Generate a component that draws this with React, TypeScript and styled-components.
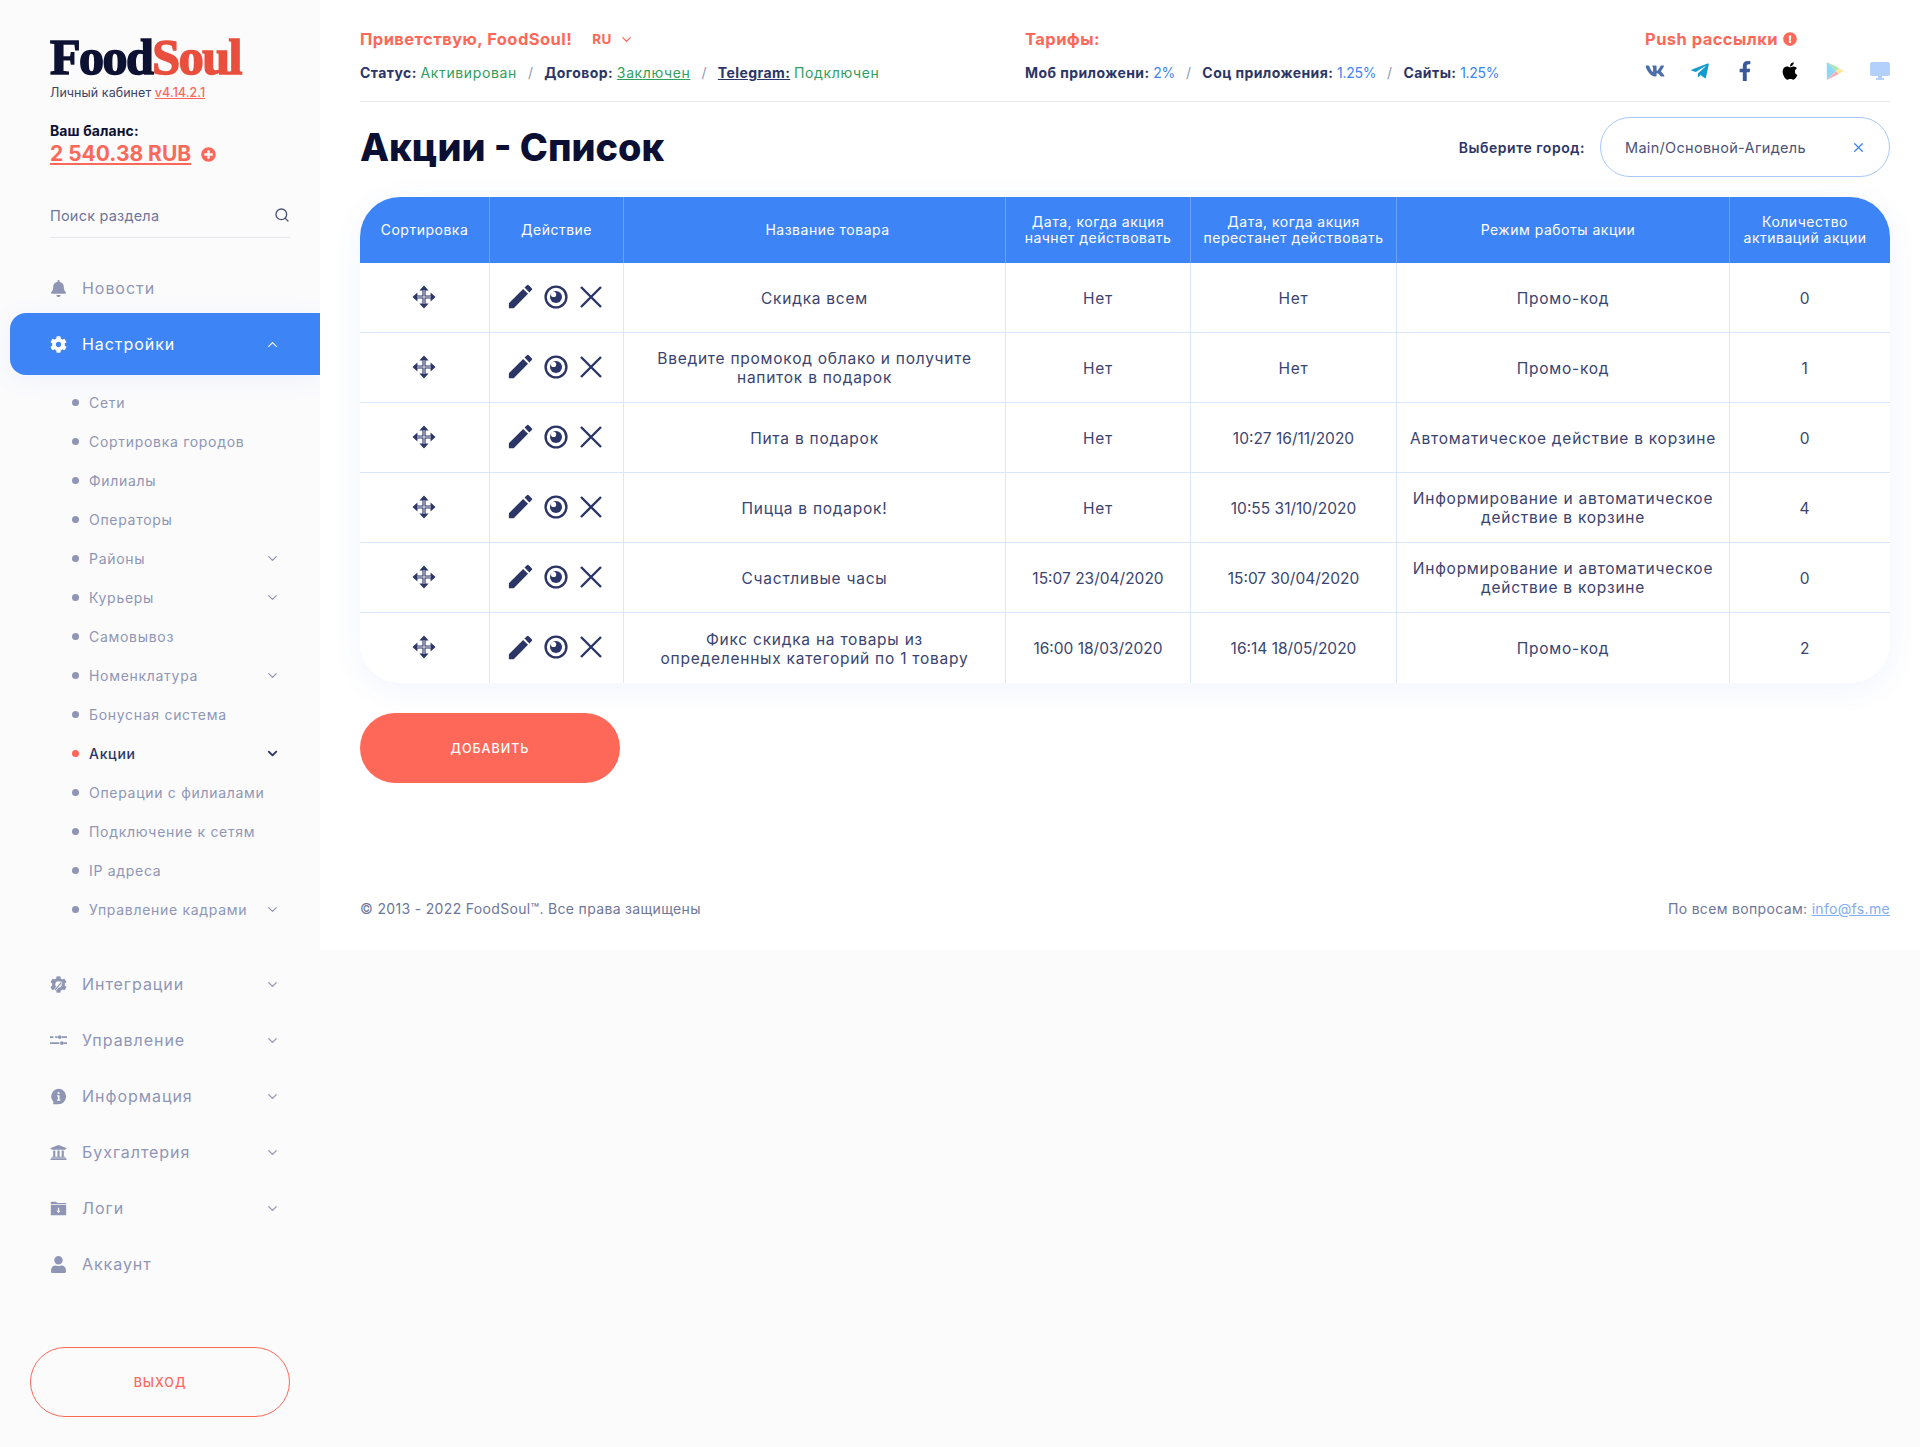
import React from "react";
import styled, { createGlobalStyle } from "styled-components";
import { FaApple, FaBell, FaCog, FaExclamationCircle, FaFacebookF, FaPlusCircle, FaTelegramPlane, FaUniversity, FaUser, FaVk } from "react-icons/fa";
import { FiChevronDown, FiChevronUp, FiSearch, FiX } from "react-icons/fi";
import { MdDesktopWindows, MdEdit } from "react-icons/md";

const NAVY = "#2b3566";
const CORAL = "#fd6858";
const BLUE = "#3d84f7";
const MUTED = "#8f96b5";

const GlobalStyle = createGlobalStyle`
  html, body { margin: 0; padding: 0; background: #fbfbfc; }
  body { font-family: "Inter", "Noto Sans", sans-serif; color: ${NAVY}; }
  * { box-sizing: border-box; }
`;

const Page = styled.div`
  display: flex;
  align-items: flex-start;
  width: 1920px;
  height: 1447px;
  overflow: hidden;
`;

// Sidebar
const Sidebar = styled.aside`
  width: 320px;
  flex: none;
  padding-top: 34px;
`;
const Brand = styled.div`
  padding-left: 50px;
`;
const Logo = styled.div`
  font-family: "Liberation Serif", serif;
  font-weight: 700;
  font-size: 50px;
  line-height: 46px;
  letter-spacing: -1.5px;
  -webkit-text-stroke: 1.6px currentColor;
  color: #0d1233;
  span { color: #e94f3d; }
`;
const Cabinet = styled.div`
  margin-top: 4px;
  font-size: 12.5px;
  line-height: 18px;
  letter-spacing: 0.05px;
  color: #3b4368;
  a { color: ${CORAL}; text-decoration: underline; font-weight: 500; }
`;
const BalanceLabel = styled.div`
  margin-top: 20px;
  font-size: 14px;
  font-weight: 700;
  line-height: 18px;
  letter-spacing: 0.1px;
  color: #0d1233;
`;
const BalanceRow = styled.div`
  display: flex;
  align-items: center;
  gap: 10px;
  margin-top: 1px;
  font-size: 21px;
  line-height: 26px;
  font-weight: 700;
  color: ${CORAL};
  u { text-underline-offset: 2px; }
  svg { width: 15px; height: 15px; }
`;
const Search = styled.div`
  display: flex;
  align-items: center;
  justify-content: space-between;
  width: 240px;
  height: 43px;
  margin: 28px 0 0 50px;
  padding-bottom: 2px;
  border-bottom: 1px solid #e6e7ec;
  font-size: 14.5px;
  letter-spacing: 0.2px;
  color: #6e769a;
  svg { width: 16px; height: 16px; color: #4a5278; }
`;
const NavList = styled.nav`
  margin-top: 22px;
`;
const NavItem = styled.div<{ $active?: boolean }>`
  display: flex;
  align-items: center;
  height: ${(p) => (p.$active ? "62px" : "56px")};
  margin-top: ${(p) => (p.$active ? "-3px" : "0")};
  margin-left: ${(p) => (p.$active ? "10px" : "0")};
  padding-left: ${(p) => (p.$active ? "40px" : "50px")};
  padding-right: 40px;
  font-size: 16px;
  letter-spacing: 0.95px;
  color: ${(p) => (p.$active ? "#fff" : MUTED)};
  background: ${(p) => (p.$active ? BLUE : "transparent")};
  border-radius: ${(p) => (p.$active ? "16px 0 0 16px" : "0")};
  box-shadow: ${(p) => (p.$active ? "0 4px 24px rgba(61,132,247,.08)" : "none")};
`;
const NavIcon = styled.span`
  display: flex;
  align-items: center;
  justify-content: center;
  width: 17px;
  height: 18px;
  margin-right: 15px;
  flex: none;
  svg { width: 17px; height: 17px; display: block; }
`;
const Grow = styled.span`
  flex: 1;
`;
const Chevron = styled.span<{ $dark?: boolean }>`
  display: flex;
  color: ${(p) => (p.$dark ? NAVY : "inherit")};
  svg { width: 15px; height: 15px; stroke-width: ${(p) => (p.$dark ? 3 : 2)}; display: block; }
`;
const SubList = styled.div`
  padding-top: 8px;
  padding-bottom: 27px;
`;
const SubItem = styled.div<{ $active?: boolean }>`
  display: flex;
  align-items: center;
  height: 39px;
  padding-left: 72px;
  padding-right: 40px;
  font-size: 14px;
  letter-spacing: 0.7px;
  color: ${(p) => (p.$active ? NAVY : MUTED)};
  font-weight: ${(p) => (p.$active ? 500 : 400)};
  &::before {
    content: "";
    width: 7px;
    height: 7px;
    margin-right: 10px;
    border-radius: 50%;
    background: ${(p) => (p.$active ? CORAL : MUTED)};
    flex: none;
  }
`;
const Logout = styled.button`
  display: block;
  width: 260px;
  height: 70px;
  margin: 55px 0 0 30px;
  border: 1px solid ${CORAL};
  border-radius: 35px;
  background: transparent;
  color: ${CORAL};
  font-family: inherit;
  font-size: 12.5px;
  font-weight: 500;
  letter-spacing: 1px;
  text-transform: uppercase;
`;

// Main panel
const Main = styled.main`
  display: flex;
  flex-direction: column;
  width: 1600px;
  height: 950px;
  padding: 0 30px 0 40px;
  background: #fff;
`;
const TopBar = styled.header`
  display: grid;
  grid-template-columns: 665px 620px 1fr;
  height: 102px;
  padding-top: 28px;
  border-bottom: 1px solid #e8e9ec;
`;
const TopHeading = styled.div`
  display: flex;
  align-items: center;
  height: 22px;
  gap: 5px;
  font-size: 16.5px;
  letter-spacing: 0.45px;
  font-weight: 700;
  color: ${CORAL};
  svg { width: 14px; height: 14px; }
`;
const Lang = styled.span`
  display: flex;
  align-items: center;
  gap: 7px;
  margin-left: 15px;
  font-size: 13.5px;
  svg { width: 15px; height: 15px; }
`;
const TopLine = styled.div`
  display: flex;
  align-items: center;
  height: 22px;
  margin-top: 11px;
  font-size: 14px;
  letter-spacing: 0.35px;
  white-space: pre;
  b { font-weight: 700; letter-spacing: 0.42px; }
`;
const Green = styled.span`
  letter-spacing: 0.62px;
  color: #2f9e5e;
`;
const Rate = styled.span`
  letter-spacing: -0.3px;
  color: ${BLUE};
`;
const Sep = styled.span`
  margin: 0 11px;
  color: ${MUTED};
`;
const SocialRow = styled.div`
  display: flex;
  gap: 25px;
  margin-top: 11px;
`;
const Social = styled.span<{ $color: string }>`
  display: flex;
  justify-content: center;
  width: 20px;
  height: 22px;
  color: ${(p) => p.$color};
  svg { width: 20px; height: 20px; display: block; }
`;
const Monitor = styled(MdDesktopWindows)`
  && { width: 24px; height: 24px; margin: -2px; flex: none; }
`;
const TitleRow = styled.div`
  display: flex;
  align-items: center;
  height: 95px;
  padding-bottom: 5px;
`;
const Title = styled.h1`
  flex: 1;
  margin: 0;
  font-size: 37.8px;
  font-weight: 800;
  color: #0b0f33;
`;
const CityLabel = styled.span`
  margin-right: 15px;
  font-size: 14px;
  font-weight: 600;
  letter-spacing: 0.55px;
`;
const CitySelect = styled.div`
  display: flex;
  align-items: center;
  justify-content: space-between;
  width: 290px;
  height: 60px;
  padding: 0 23px 0 24px;
  border: 1px solid #a9c8fb;
  border-radius: 30px;
  font-size: 14.5px;
  letter-spacing: 0.3px;
  color: #4a5278;
  svg { width: 15px; height: 15px; color: ${BLUE}; }
`;
const TableWrap = styled.div`
  border-radius: 40px;
  overflow: hidden;
  box-shadow: 0 6px 30px rgba(61, 100, 247, 0.07);
`;
const Table = styled.table`
  width: 1530px;
  table-layout: fixed;
  border-collapse: separate;
  border-spacing: 0;
  background: #fff;
`;
const Th = styled.th<{ $shift?: number }>`
  height: 66px;
  padding: 0 6px;
  padding-left: ${(p) => 6 + (p.$shift && p.$shift > 0 ? p.$shift : 0)}px;
  padding-right: ${(p) => 6 + (p.$shift && p.$shift < 0 ? -p.$shift : 0)}px;
  background: ${BLUE};
  color: #fff;
  font-size: 14px;
  line-height: 16px;
  font-weight: 400;
  letter-spacing: 0.5px;
  border-right: 1px solid #6da2f9;
  &:last-child { border-right: 0; }
`;
const Td = styled.td<{ $time?: boolean; $wide?: boolean; $last?: boolean }>`
  height: 70px;
  padding: 1px ${(p) => (p.$wide ? "30px" : "8px")} 0;
  padding-right: ${(p) => (p.$last ? "18px" : p.$wide ? "30px" : "8px")};
  text-align: center;
  font-size: 15.5px;
  line-height: 19px;
  color: #3a4470;
  letter-spacing: ${(p) => (p.$time ? "0" : "0.75px")};
  border-right: 1px solid #d9e6fc;
  border-bottom: 1px solid #d9e6fc;
  &:last-child { border-right: 0; }
  tr:last-child & { border-bottom: 0; }
`;
const Actions = styled.div`
  display: flex;
  justify-content: center;
  gap: 11px;
  margin: -3px 2px 0 0;
  svg { width: 24px; height: 24px; display: block; }
`;
const Pencil = styled(MdEdit)`
  && { width: 31px; height: 31px; margin: -3.5px; }
  color: ${NAVY};
`;
const MoveCell = styled.div`
  display: flex;
  justify-content: center;
  margin: -3px 1px 0 0;
  svg { width: 24px; height: 24px; display: block; }
`;
const AddButton = styled.button`
  width: 260px;
  height: 70px;
  margin-top: 30px;
  border: 0;
  border-radius: 35px;
  background: ${CORAL};
  color: #fff;
  font-family: inherit;
  font-size: 12.5px;
  font-weight: 500;
  letter-spacing: 1px;
  text-transform: uppercase;
`;
const Footer = styled.footer`
  display: flex;
  justify-content: space-between;
  margin-top: 116px;
  font-size: 14px;
  letter-spacing: 0.33px;
  line-height: 20px;
  color: #6e769a;
  a { color: #82acf5; text-decoration: underline; }
`;

const MoveIcon = () => (
  <svg viewBox="0 0 24 24" fill={NAVY}>
    <path d="M12 .5l4.600 5h-3v5h5v-3l4.900 4.500-4.900 4.500v-3h-5v5h3l-4.600 5-4.600-5h3v-5h-5v3L.5 12l4.900-4.500v3h5v-5h-3z" />
    <path d="M12 5v14M5 12h14" stroke="#fff" strokeWidth="0.9" />
  </svg>
);
const EyeIcon = () => (
  <svg viewBox="0 0 24 24">
    <circle cx="12" cy="12" r="10.4" fill="none" stroke={NAVY} strokeWidth="2.4" />
    <circle cx="12" cy="12" r="6" fill={NAVY} />
    <circle cx="9.6" cy="9.4" r="2.6" fill="#fff" />
  </svg>
);
const CrossIcon = () => (
  <svg viewBox="0 0 24 24" fill="none" stroke={NAVY} strokeWidth="2.4">
    <path d="M2 2l20 20M22 2L2 22" />
  </svg>
);
const IntegrationIcon = () => (
  <svg viewBox="0 0 512 512" fill="currentColor">
    <path d="M487 316l-42-25a192 192 0 000-70l42-25c5-3 7-9 5-14a248 248 0 00-55-95c-4-4-10-5-15-2l-42 24a187 187 0 00-61-35V26c0-6-4-11-9-12a250 250 0 00-110 0c-6 1-10 6-10 12v48a193 193 0 00-61 35L88 85c-5-3-11-2-15 2a246 246 0 00-55 95c-2 5 0 11 5 14l42 25a192 192 0 000 70l-42 25c-5 3-7 9-5 14a248 248 0 0055 95c4 4 10 5 15 2l42-24a187 187 0 0061 35v48c0 6 4 11 10 12a250 250 0 00110 0c5-1 9-6 9-12v-48a193 193 0 0061-35l42 24c5 3 11 2 15-2a246 246 0 0055-95c2-5 0-11-5-14z" />
    <circle cx="256" cy="256" r="95" fill="#fbfbfc" />
    <path d="M130 400L330 170l40 40-200 230z" fill="currentColor" stroke="#fbfbfc" strokeWidth="22" />
  </svg>
);
const SlidersIcon = () => (
  <svg viewBox="0 0 20 20" fill="currentColor">
    <path d="M0 5h4v2H0zM6 5h3v2H6zM14 5h6v2h-6zM0 12h11v2H0zM16 12h4v2h-4z" />
    <circle cx="11.5" cy="6" r="2.2" />
    <circle cx="14" cy="13" r="2.2" />
  </svg>
);
const InfoIcon = () => (
  <svg viewBox="0 0 20 20">
    <path d="M10 1a9 9 0 110 18H3.500l.7-2.600A9 9 0 0110 1z" fill="currentColor" />
    <path d="M9 5h2.200v2.200H9zM8.300 8.600h2.900v5h1v1.400H8.300v-1.400h1v-3.600h-1z" fill="#fbfbfc" />
  </svg>
);
const FolderIcon = () => (
  <svg viewBox="0 0 20 20" fill="currentColor">
    <path d="M1 2h6l1.500 1.600H19V5H1zM1 6h18v12H1z" />
    <path d="M9.300 9h1.400v3.600h1.700L10 15.400l-2.400-2.800h1.700z" fill="#fbfbfc" />
  </svg>
);
const PlayIcon = () => (
  <svg viewBox="0 0 20 22">
    <path d="M1 1v20l10-10z" fill="#8fd8f5" />
    <path d="M1 1l10 10 3.200-3.400z" fill="#a5e5b5" />
    <path d="M1 21l10-10 3.200 3.400z" fill="#f9aeb4" />
    <path d="M14.200 7.600L11 11l3.200 3.400L19.500 11z" fill="#fbe69a" />
  </svg>
);

const subItems = [
  { label: "Сети" },
  { label: "Сортировка городов" },
  { label: "Филиалы" },
  { label: "Операторы" },
  { label: "Районы", more: true },
  { label: "Курьеры", more: true },
  { label: "Самовывоз" },
  { label: "Номенклатура", more: true },
  { label: "Бонусная система" },
  { label: "Акции", more: true, active: true },
  { label: "Операции с филиалами" },
  { label: "Подключение к сетям" },
  { label: "IP адреса" },
  { label: "Управление кадрами", more: true },
];

const lowerNav = [
  { label: "Интеграции", icon: <IntegrationIcon />, more: true },
  { label: "Управление", icon: <SlidersIcon />, more: true },
  { label: "Информация", icon: <InfoIcon />, more: true },
  { label: "Бухгалтерия", icon: <FaUniversity />, more: true },
  { label: "Логи", icon: <FolderIcon />, more: true },
  { label: "Аккаунт", icon: <FaUser /> },
];

const columns = [
  { title: "Сортировка", width: 130 },
  { title: "Действие", width: 134 },
  { title: "Название товара", width: 382, shift: 26 },
  { title: "Дата, когда акция начнет действовать", width: 185 },
  { title: "Дата, когда акция перестанет действовать", width: 206 },
  { title: "Режим работы акции", width: 333, shift: -10 },
  { title: "Количество активаций акции", width: 160, shift: -10 },
];

const rows = [
  ["Скидка всем", "Нет", "Нет", "Промо-код", "0"],
  ["Введите промокод облако и получите напиток в подарок", "Нет", "Нет", "Промо-код", "1"],
  ["Пита в подарок", "Нет", "10:27 16/11/2020", "Автоматическое действие в корзине", "0"],
  ["Пицца в подарок!", "Нет", "10:55 31/10/2020", "Информирование и автоматическое действие в корзине", "4"],
  ["Счастливые часы", "15:07 23/04/2020", "15:07 30/04/2020", "Информирование и автоматическое действие в корзине", "0"],
  ["Фикс скидка на товары из определенных категорий по 1 товару", "16:00 18/03/2020", "16:14 18/05/2020", "Промо-код", "2"],
];

export default function App(): JSX.Element {
  return (
    <Page>
      <GlobalStyle />
      <Sidebar>
        <Brand>
          <Logo>Food<span>Soul</span></Logo>
          <Cabinet>Личный кабинет <a>v4.14.2.1</a></Cabinet>
          <BalanceLabel>Ваш баланс:</BalanceLabel>
          <BalanceRow><u>2 540.38 RUB</u><FaPlusCircle /></BalanceRow>
        </Brand>
        <Search>Поиск раздела<FiSearch /></Search>
        <NavList>
          <NavItem><NavIcon><FaBell /></NavIcon>Новости</NavItem>
          <NavItem $active>
            <NavIcon><FaCog /></NavIcon>Настройки<Grow />
            <Chevron><FiChevronUp /></Chevron>
          </NavItem>
          <SubList>
            {subItems.map((item) => (
              <SubItem key={item.label} $active={item.active}>
                {item.label}<Grow />
                {item.more && <Chevron $dark={item.active}><FiChevronDown /></Chevron>}
              </SubItem>
            ))}
          </SubList>
          {lowerNav.map((item) => (
            <NavItem key={item.label}>
              <NavIcon>{item.icon}</NavIcon>{item.label}<Grow />
              {item.more && <Chevron><FiChevronDown /></Chevron>}
            </NavItem>
          ))}
        </NavList>
        <Logout>выход</Logout>
      </Sidebar>
      <Main>
        <TopBar>
          <div>
            <TopHeading>Приветствую, FoodSoul!<Lang>RU <FiChevronDown /></Lang></TopHeading>
            <TopLine>
              <b>Статус: </b><Green>Активирован</Green><Sep>/</Sep>
              <b>Договор: </b><Green><u>Заключен</u></Green><Sep>/</Sep>
              <b><u>Telegram:</u> </b><Green>Подключен</Green>
            </TopLine>
          </div>
          <div>
            <TopHeading>Тарифы:</TopHeading>
            <TopLine>
              <b>Моб приложени: </b><Rate>2%</Rate><Sep>/</Sep>
              <b>Соц приложения: </b><Rate>1.25%</Rate><Sep>/</Sep>
              <b>Сайты: </b><Rate>1.25%</Rate>
            </TopLine>
          </div>
          <div>
            <TopHeading>Push рассылки <FaExclamationCircle /></TopHeading>
            <SocialRow>
              <Social $color="#4a6ea9"><FaVk /></Social>
              <Social $color="#139bd0"><FaTelegramPlane /></Social>
              <Social $color="#3b5998"><FaFacebookF /></Social>
              <Social $color="#000"><FaApple /></Social>
              <Social $color="#8fd8f5"><PlayIcon /></Social>
              <Social $color="#b3cffb"><Monitor /></Social>
            </SocialRow>
          </div>
        </TopBar>
        <TitleRow>
          <Title>Акции - Список</Title>
          <CityLabel>Выберите город:</CityLabel>
          <CitySelect>Main/Основной-Агидель<FiX /></CitySelect>
        </TitleRow>
        <TableWrap>
          <Table>
            <colgroup>
              {columns.map((c) => <col key={c.title} width={c.width} />)}
            </colgroup>
            <thead>
              <tr>
                {columns.map((c) => <Th key={c.title} $shift={c.shift}>{c.title}</Th>)}
              </tr>
            </thead>
            <tbody>
              {rows.map((row) => (
                <tr key={row[0]}>
                  <Td><MoveCell><MoveIcon /></MoveCell></Td>
                  <Td>
                    <Actions>
                      <Pencil />
                      <EyeIcon />
                      <CrossIcon />
                    </Actions>
                  </Td>
                  {row.map((cell, i) => (
                    <Td key={i} $wide={i === 0} $last={i === 4} $time={/\d\d:\d\d/.test(cell)}>{cell}</Td>
                  ))}
                </tr>
              ))}
            </tbody>
          </Table>
        </TableWrap>
        <div><AddButton>Добавить</AddButton></div>
        <Footer>
          <span>© 2013 - 2022 FoodSoul™. Все права защищены</span>
          <span>По всем вопросам: <a>info@fs.me</a></span>
        </Footer>
      </Main>
    </Page>
  );
}
